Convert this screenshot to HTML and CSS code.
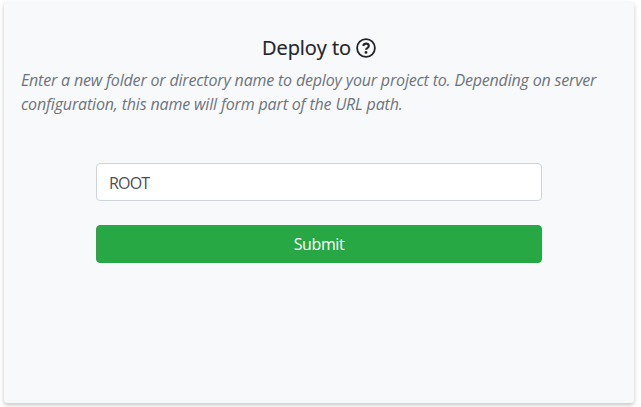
FILE: index.html
```html
<!DOCTYPE html>
<html lang="en">
<head>
<meta charset="utf-8">
<title>Deploy to</title>
<link rel="stylesheet" href="styles.css">
</head>
<body>
<main class="card">
  <h1 class="title"><span class="title-text">Deploy to</span>
    <svg class="help" viewBox="0 0 20 20" aria-hidden="true"><circle cx="10" cy="10" r="8.9"/><path class="mark" d="M7.1 7.8C7.7 6.2 8.7 5.6 10 5.6c1.6 0 2.8 1 2.8 2.4 0 2-2.8 2-2.8 3.8"/><circle class="dot" cx="10" cy="14.4" r="1.4"/></svg>
  </h1>
  <p class="description"><span class="line first">Enter a new folder or directory name to deploy your project to. Depending on server</span> <span class="line second">configuration, this name will form part of the URL path.</span></p>
  <form class="form">
    <input class="field" type="text" value="ROOT" aria-label="Folder name">
    <button class="submit" type="button">Submit</button>
  </form>
</main>
</body>
</html>
```
FILE: styles.css
```css
* { box-sizing: border-box; }
body { margin: 0; padding: 2px 7px 4px 4px; height: 407px; background: #fff; font-family: "Open Sans", "Noto Sans", sans-serif; overflow: hidden; }
.card { height: 401px; padding: 34px 17px 0; background: #f8f9fb; border-radius: 3px; box-shadow: 0 2px 4px rgba(0,0,0,.23); }
.title { margin: 0; height: 24px; display: flex; align-items: center; justify-content: center; gap: 5px; font-size: 20px; line-height: 24px; font-weight: 500; color: #212529; }
.title-text { letter-spacing: -.05px; -webkit-text-stroke: .2px #212529; }
.help { width: 20px; height: 20px; fill: none; stroke: #212529; stroke-width: 1.8; }
.help .mark { stroke-width: 2.1; }
.help .dot { fill: #212529; stroke: none; }
.description { margin: 8px 0 0; font-size: 16px; line-height: 24px; font-style: italic; color: #6c757d; }
.line { display: block; white-space: nowrap; }
.first { letter-spacing: -.18px; }
.second { letter-spacing: -.16px; }
.form { width: 446px; margin: 47px auto 0; display: grid; gap: 24px; }
.field, .submit { width: 100%; height: 38px; border-radius: 4px; font: 16px/24px "Open Sans", sans-serif; }
.field { padding: 7px 12px 5px; border: 1px solid #ced4da; background: #fff; color: #495057; letter-spacing: -.8px; }
.submit { padding: 6px 12px; border: 1px solid #28a745; background: #28a745; color: #fff; letter-spacing: -.4px; }
```
